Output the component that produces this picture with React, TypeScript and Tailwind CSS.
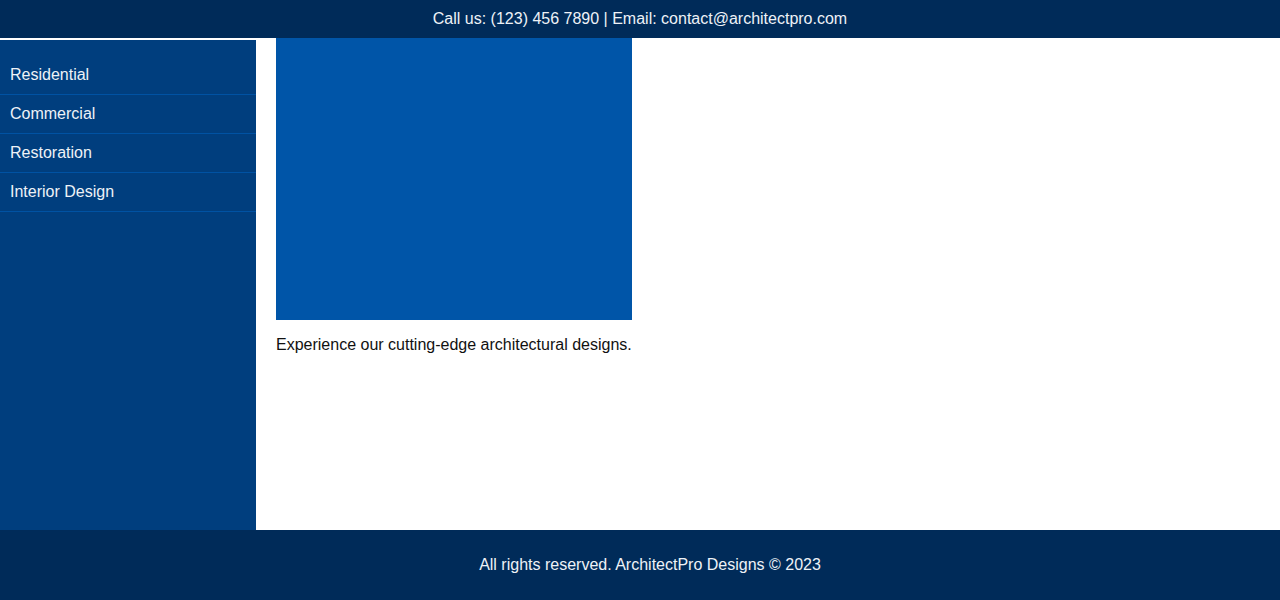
import React from 'react';

const links = ['Residential', 'Commercial', 'Restoration', 'Interior Design'];

const App: React.FC = () => {
  return (
    <div className="min-h-[600px] flex flex-col bg-white font-['Liberation_Sans',Arial,sans-serif] text-[16px] leading-[18px]">
      {/* Top bar */}
      <header className="h-[38px] bg-[#002b59] text-[#eef2f7] flex items-center justify-center">
        Call us: (123) 456 7890 | Email: contact@architectpro.com
      </header>

      <div className="flex h-[492px]">
        {/* Sidebar */}
        <nav className="w-[256px] mt-[2px] bg-[#003e7e] pt-[16px]">
          <ul>
            {links.map((link) => (
              <li key={link} className="border-b border-[#0052a3]">
                <a href="#" className="block px-[10px] py-[10px] text-[#eef2f7]">
                  {link}
                </a>
              </li>
            ))}
          </ul>
        </nav>

        {/* Main content */}
        <main className="flex-1 px-5">
          <div className="w-[356px] h-[282px] bg-[#0055a8]"></div>
          <p className="mt-4 text-[#111]">Experience our cutting-edge architectural designs.</p>
        </main>
      </div>

      {/* Footer */}
      <footer className="h-[70px] bg-[#002b59] text-[#eef2f7] flex items-center justify-center pl-5">
        All rights reserved. ArchitectPro Designs © 2023
      </footer>
    </div>
  );
};

export default App;
